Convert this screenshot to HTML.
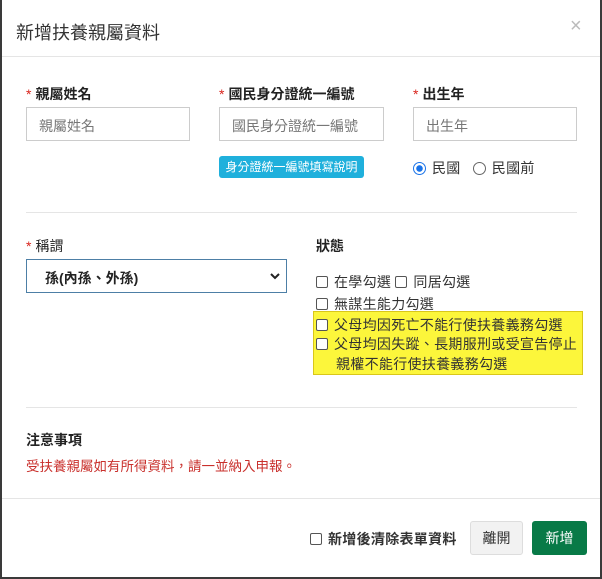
<!DOCTYPE html>
<html><head><meta charset="utf-8"><style>
*{box-sizing:border-box;margin:0;padding:0}
body{width:602px;height:579px;background:#3a3a3a;font-family:"Liberation Sans","Noto Sans CJK TC",sans-serif;color:#222;position:relative;overflow:hidden}
.m{position:absolute;left:2px;top:0;width:598px;height:577px;background:#fff}
.a{position:absolute;white-space:nowrap}
.t{font-size:18px;color:#333}
.lb{font-size:14px;font-weight:bold;color:#222}
.lb i{color:#d9241c;font-style:normal;font-weight:normal;margin-right:4px}
.in{position:absolute;height:34px;border:1px solid #ccc;font-size:14px;color:#777;padding:8px 0 0 12px}
.hr{position:absolute;height:1px;background:#e5e5e5}
.cb{display:inline-block;width:12px;height:12px;border:1px solid #555;border-radius:2px;vertical-align:-1px;margin-right:6px;background:#fff}
.s{font-size:14px;color:#333;letter-spacing:0.3px}
</style></head><body><div class="m">
<div class="a t" style="left:14px;top:19px">新增扶養親屬資料</div>
<div class="a" style="left:568px;top:15px;font-size:20px;color:#bbb">×</div>
<div class="hr" style="left:0;width:598px;top:56px"></div>

<div class="a lb" style="left:24px;top:84px"><i>*</i>親屬姓名</div>
<div class="a lb" style="left:217px;top:84px"><i>*</i>國民身分證統一編號</div>
<div class="a lb" style="left:411px;top:84px"><i>*</i>出生年</div>
<div class="in" style="left:24px;top:107px;width:164px">親屬姓名</div>
<div class="in" style="left:217px;top:107px;width:165px">國民身分證統一編號</div>
<div class="in" style="left:411px;top:107px;width:164px">出生年</div>
<div class="a" style="left:217px;top:156px;width:145px;height:22px;background:#1fb0dc;border-radius:3px;color:#fff;font-size:12px;text-align:center;line-height:22px">身分證統一編號填寫說明</div>
<div class="a s" style="left:411px;top:158px"><span style="display:inline-block;width:13px;height:13px;border-radius:50%;border:1px solid #1a73e8;background:radial-gradient(#1a73e8 0 3px,#fff 3.5px);vertical-align:-2px;margin-right:6px"></span>民國 <span style="display:inline-block;width:13px;height:13px;border-radius:50%;border:1px solid #666;vertical-align:-2px;margin:0 6px 0 8px"></span>民國前</div>

<div class="hr" style="left:24px;width:551px;top:212px"></div>

<div class="a lb" style="left:24px;top:236px"><i>*</i><span style="font-weight:normal">稱謂</span></div>
<div class="a lb" style="left:314px;top:236px">狀態</div>
<div class="a" style="left:24px;top:259px;width:261px;height:34px;border:1px solid #4d7fa6;font-size:14px;font-weight:bold;padding:8px 0 0 18px">孫(內孫、外孫)<svg style="position:absolute;right:6px;top:12px" width="10" height="8" viewBox="0 0 10 8"><path d="M1 2l4 4 4-4" fill="none" stroke="#222" stroke-width="2"/></svg></div>
<div class="a s" style="left:314px;top:272px"><span class="cb"></span>在學勾選 <span class="cb" style="margin-left:0"></span>同居勾選</div>
<div class="a s" style="left:314px;top:294px"><span class="cb"></span>無謀生能力勾選</div>
<div class="a" style="left:311px;top:311px;width:270px;height:64px;background:#fcf63b;border:1px solid #d9c71a"></div>
<div class="a s" style="left:314px;top:315px"><span class="cb"></span>父母均因死亡不能行使扶養義務勾選</div>
<div class="a s" style="left:314px;top:334px"><span class="cb"></span>父母均因失蹤、長期服刑或受宣告停止</div>
<div class="a s" style="left:334px;top:354px">親權不能行使扶養義務勾選</div>

<div class="hr" style="left:24px;width:551px;top:407px"></div>
<div class="a lb" style="left:24px;top:430px">注意事項</div>
<div class="a" style="left:24px;top:455px;font-size:13.5px;color:#c9302c">受扶養親屬如有所得資料，請一並納入申報。</div>
<div class="hr" style="left:0;width:598px;top:498px"></div>
<div class="a s" style="left:308px;top:529px;font-weight:bold;color:#333"><span class="cb"></span>新增後清除表單資料</div>
<div class="a" style="left:468px;top:521px;width:53px;height:34px;background:#f2f2f2;border:1px solid #ddd;border-radius:3px;font-size:14px;color:#333;text-align:center;line-height:32px">離開</div>
<div class="a" style="left:530px;top:521px;width:55px;height:34px;background:#087a47;border-radius:3px;font-size:14px;color:#fff;text-align:center;line-height:34px">新增</div>
</div></body></html>
